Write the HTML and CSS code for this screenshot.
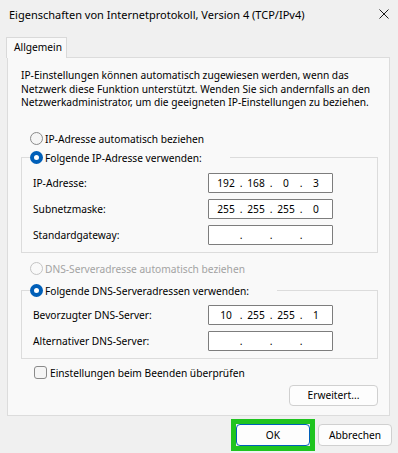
FILE: index.html
```html
<!DOCTYPE html>
<html lang="de">
<head>
<meta charset="utf-8">
<title>Eigenschaften von Internetprotokoll, Version 4 (TCP/IPv4)</title>
<link rel="stylesheet" href="styles.css">
</head>
<body>
<div class="window">
  <div class="titlebar">
    <span class="title">Eigenschaften von Internetprotokoll, Version 4 (TCP/IPv4)</span>
    <svg class="close" width="10" height="10" viewBox="0 0 10 10"><path d="M0.5 0.5 L9.5 9.5 M9.5 0.5 L0.5 9.5" stroke="#1b1b1b" stroke-width="1" fill="none"/></svg>
  </div>
  <div class="tabs"><div class="tab">Allgemein</div></div>
  <div class="panel">
    <p class="desc">IP-Einstellungen können automatisch zugewiesen werden, wenn das<br>Netzwerk diese Funktion unterstützt. Wenden Sie sich andernfalls an den<br>Netzwerkadministrator, um die geeigneten IP-Einstellungen zu beziehen.</p>

    <div class="opt opt-ip"><span class="radio"></span>IP-Adresse automatisch beziehen</div>
    <fieldset class="group group-ip">
      <legend><span class="opt"><span class="radio checked"></span>Folgende IP-Adresse verwenden:</span></legend>
      <div class="fields">
        <div class="field"><span class="label">IP-Adresse:</span><div class="ipbox"><span>192</span><i>.</i><span>168</span><i>.</i><span>0</span><i>.</i><span>3</span></div></div>
        <div class="field"><span class="label">Subnetzmaske:</span><div class="ipbox"><span>255</span><i>.</i><span>255</span><i>.</i><span>255</span><i>.</i><span>0</span></div></div>
        <div class="field"><span class="label">Standardgateway:</span><div class="ipbox"><span></span><i>.</i><span></span><i>.</i><span></span><i>.</i><span></span></div></div>
      </div>
    </fieldset>

    <div class="opt opt-dns disabled"><span class="radio"></span>DNS-Serveradresse automatisch beziehen</div>
    <fieldset class="group group-dns">
      <legend><span class="opt"><span class="radio checked"></span>Folgende DNS-Serveradressen verwenden:</span></legend>
      <div class="fields">
        <div class="field"><span class="label">Bevorzugter DNS-Server:</span><div class="ipbox"><span>10</span><i>.</i><span>255</span><i>.</i><span>255</span><i>.</i><span>1</span></div></div>
        <div class="field"><span class="label">Alternativer DNS-Server:</span><div class="ipbox"><span></span><i>.</i><span></span><i>.</i><span></span><i>.</i><span></span></div></div>
      </div>
    </fieldset>

    <div class="check-row"><span class="checkbox"></span>Einstellungen beim Beenden überprüfen</div>
    <button class="btn btn-adv">Erweitert...</button>
  </div>
  <div class="actions">
    <div class="highlight"><button class="btn btn-ok">OK</button></div>
    <button class="btn btn-cancel">Abbrechen</button>
  </div>
</div>
</body>
</html>
```

FILE: styles.css
```css
html, body {
  margin: 0;
  padding: 0;
}
body {
  background: #f0f0f0;
  font-family: "Noto Sans", "Liberation Sans", sans-serif;
  font-size: 10.2px;
  color: #000;
  width: 398px;
  height: 453px;
  overflow: hidden;
}
.window {
  display: flex;
  flex-direction: column;
}
.titlebar {
  height: 28px;
  display: flex;
  align-items: center;
  justify-content: space-between;
  padding: 0 9px;
}
.title {
  font-size: 11px;
}
.close {
  display: block;
}
.tabs {
  display: flex;
  padding: 9px 0 0 6px;
}
.tab {
  position: relative;
  z-index: 1;
  box-sizing: border-box;
  width: 61px;
  height: 21px;
  margin-bottom: -1px;
  padding-left: 7px;
  line-height: 19px;
  background: #f9f9f9;
  border: 1px solid #d9d9d9;
  border-bottom: 0;
}
.panel {
  box-sizing: border-box;
  height: 359px;
  margin: 0 8px 0 7px;
  padding: 0 11px 0 13px;
  background: #f9f9f9;
  border: 1px solid #dcdcdc;
  display: flex;
  flex-direction: column;
}
.desc {
  margin: 11px 0 0;
  line-height: 13.5px;
  white-space: nowrap;
}
.opt {
  display: flex;
  align-items: center;
  height: 16px;
  white-space: nowrap;
}
.opt-ip {
  margin: 21px 0 0 9px;
}
.opt-dns {
  margin: 8px 0 0 9px;
}
.disabled {
  color: #a3a3a3;
}
.radio {
  flex: none;
  box-sizing: border-box;
  width: 13px;
  height: 13px;
  margin-right: 2px;
  border-radius: 50%;
  border: 1px solid #8a8a8a;
  background: #f5f5f5;
}
.disabled .radio {
  border-color: #c4c4c4;
  background: #f9f9f9;
}
.radio.checked {
  border: 4px solid #005fb8;
  background: #ffffff;
}
.group {
  margin: 0;
  min-width: 0;
  border: 1px solid #dcdcdc;
  padding: 7px 0 7px 8px;
}
.group-ip {
  margin-top: 3px;
}
.group-dns {
  margin-top: 6px;
  padding-top: 6px;
}
legend {
  padding: 0 28px 0 0;
}
.fields {
  display: flex;
  flex-direction: column;
  gap: 6px;
}
.field {
  display: grid;
  grid-template-columns: 175px 125px;
  align-items: center;
  height: 20px;
  padding-left: 3px;
}
.ipbox {
  box-sizing: border-box;
  height: 20px;
  display: flex;
  align-items: center;
  padding-left: 5px;
  background: #ffffff;
  border: 1px solid #7d7d7d;
  border-radius: 1px;
}
.ipbox span {
  width: 24px;
  text-align: center;
}
.ipbox i {
  width: 6px;
  text-align: center;
  font-style: normal;
}
.check-row {
  display: flex;
  align-items: center;
  height: 16px;
  margin: 6px 0 0 13px;
}
.checkbox {
  flex: none;
  box-sizing: border-box;
  width: 13px;
  height: 13px;
  margin-right: 3px;
  border: 1px solid #8a8a8a;
  border-radius: 3px;
  background: #f5f5f5;
}
.btn {
  box-sizing: border-box;
  height: 21px;
  padding: 0;
  font-family: "Noto Sans", "Liberation Sans", sans-serif;
  font-size: 10.2px;
  color: #000;
  background: #fdfdfd;
  border: 1px solid #d0d0d0;
  border-radius: 4px;
}
.btn-adv {
  align-self: flex-end;
  width: 89px;
  margin-top: 4px;
}
.actions {
  display: flex;
  justify-content: flex-end;
  align-items: flex-start;
  gap: 3px;
  padding: 3px 6px 0 0;
}
.highlight {
  display: flex;
  border: 5px solid #1fc41f;
}
.actions .btn {
  width: 74px;
  height: 22px;
}
.btn-ok {
  border-color: #005fb8;
}
.btn-cancel {
  margin-top: 5px;
}
```
